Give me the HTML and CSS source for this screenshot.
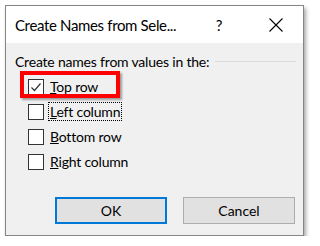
FILE: index.html
```html
<!DOCTYPE html>
<html>
<head>
<meta charset="utf-8">
<link rel="stylesheet" href="styles.css">
</head>
<body>
<div class="dialog">
  <div class="titlebar">
    <div class="title">Create Names from Sele...</div>
    <div class="tb-btn help">?</div>
    <div class="tb-btn close">
      <svg width="14" height="14" viewBox="0 0 14 14"><path d="M0.5 0.5 L13.5 13.5 M13.5 0.5 L0.5 13.5" stroke="#000" stroke-width="1.1" fill="none"/></svg>
    </div>
  </div>
  <div class="content">
    <div class="group-head">
      <span class="group-label">Create names from values in the:</span>
      <span class="group-line"></span>
    </div>
    <div class="options">
      <div class="row">
        <span class="box"><svg width="14" height="14" viewBox="0 0 14 14"><path d="M2.5 7.5 L5.5 10.5 L11.5 3.5" stroke="#333" stroke-width="1.2" fill="none"/></svg></span>
        <span class="label"><u>T</u>op row</span>
        <span class="highlight"></span>
      </div>
      <div class="row">
        <span class="box"></span>
        <span class="label focus"><u>L</u>eft column</span>
      </div>
      <div class="row">
        <span class="box"></span>
        <span class="label"><u>B</u>ottom row</span>
      </div>
      <div class="row">
        <span class="box"></span>
        <span class="label"><u>R</u>ight column</span>
      </div>
    </div>
    <div class="footer">
      <button class="btn primary">OK</button>
      <button class="btn">Cancel</button>
    </div>
  </div>
</div>
</body>
</html>
```

FILE: styles.css
```css
html, body {
  margin: 0;
  padding: 0;
  background: #ffffff;
}
body {
  font-family: Lato, "Noto Sans", sans-serif;
  font-size: 14px;
  letter-spacing: -0.2px;
  color: #000;
}
.dialog {
  margin: 5px 0 0 5px;
  width: 299px;
  height: 231px;
  box-sizing: border-box;
  border: 1px solid #858585;
  background: #f0f0f0;
  box-shadow: 2px 3px 4px rgba(0,0,0,0.35);
  display: flex;
  flex-direction: column;
}
.titlebar {
  height: 37px;
  background: #ffffff;
  display: flex;
  align-items: center;
  padding-left: 9px;
  padding-right: 12px;
  flex: none;
}
.title {
  flex: 1;
  font-size: 15px;
  letter-spacing: -0.35px;
  white-space: nowrap;
}
.tb-btn {
  width: 30px;
  display: flex;
  justify-content: center;
  align-items: center;
  font-size: 15px;
}
.help {
  margin-right: 27px;
}
.content {
  flex: 1;
  display: flex;
  flex-direction: column;
  padding: 8px 7px 11px 9px;
}
.group-head {
  display: flex;
  align-items: center;
  height: 20px;
}
.group-label {
  white-space: nowrap;
}
.group-line {
  flex: 1;
  height: 1px;
  background: #dcdcdc;
  margin-left: 6px;
}
.options {
  margin-top: 3px;
  margin-left: 13px;
  display: flex;
  flex-direction: column;
}
.row {
  position: relative;
  height: 25px;
  display: flex;
  align-items: center;
}
.box {
  width: 16px;
  height: 16px;
  box-sizing: border-box;
  border: 1px solid #333;
  background: #fff;
  display: flex;
  align-items: center;
  justify-content: center;
  flex: none;
}
.label {
  margin-left: 5px;
  padding: 0 1px;
  line-height: 17px;
}
.focus {
  outline: 1px dotted #000;
}
.highlight {
  position: absolute;
  left: -8px;
  top: -3px;
  width: 100px;
  height: 27px;
  box-sizing: border-box;
  border: 4px solid #ff0000;
  box-shadow: 2px 2px 2px rgba(0,0,0,0.35);
}
.footer {
  margin-top: auto;
  display: flex;
  justify-content: flex-end;
  gap: 16px;
  padding-right: 1px;
}
.btn {
  width: 112px;
  height: 27px;
  box-sizing: border-box;
  background: #e1e1e1;
  border: 1px solid #adadad;
  font-family: Lato, "Noto Sans", sans-serif;
  font-size: 14px;
  color: #000;
  padding: 0;
  margin: 0;
}
.btn.primary {
  border: 2px solid #0078d7;
}
```
